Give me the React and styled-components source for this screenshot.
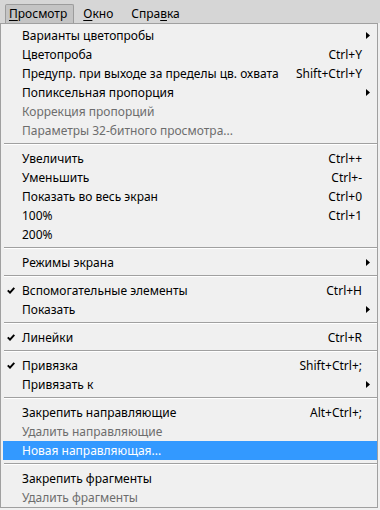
import * as React from "react"
import styled, { createGlobalStyle } from "styled-components"

const GlobalStyle = createGlobalStyle`
  html, body {
    margin: 0;
    padding: 0;
    background: #f0f0f0;
  }
  body {
    font-family: "Noto Sans", "Open Sans", "DejaVu Sans", sans-serif;
    font-size: 12px;
    color: #000;
  }
`

const MenuBar = styled.div`
  display: flex;
  align-items: flex-end;
  height: 23px;
  background: #d6d6d6;
  padding-left: 5px;
  box-sizing: border-box;
`
const BarItem = styled.div`
  height: 19px;
  line-height: 18px;
  padding: ${props => (props.$open ? "0 6px 0 3px" : "0 8px")};
  box-sizing: border-box;
  background: ${props => (props.$open ? "#c4c4c4" : "transparent")};
  border: 1px solid ${props => (props.$open ? "#9c9c9c" : "transparent")};
  border-bottom: none;
  border-radius: 2px 2px 0 0;

  u {
    text-decoration: underline;
    text-underline-offset: 2px;
  }
`

const Panel = styled.div`
  width: 378px;
  box-sizing: border-box;
  border: 1px solid #a0a0a0;
  background: #f0f0f0;
  padding: 2px 0 0 1px;
`
const Row = styled.div`
  position: relative;
  display: flex;
  align-items: center;
  height: 19px;
  margin-left: ${props => (props.$active ? "1px" : "0")};
  padding-left: ${props => (props.$active ? "19px" : "20px")};
  padding-right: 15px;
  background: ${props => (props.$active ? "#3399ff" : "transparent")};
  color: ${props =>
    props.$active ? "#fff" : props.$disabled ? "#6d6d6d" : "#000"};
  white-space: nowrap;
`
const Label = styled.span`
  flex: 1;
  line-height: 19px;
`
const Shortcut = styled.span`
  line-height: 19px;
`
const Check = styled.svg`
  position: absolute;
  left: 5px;
  top: 6px;
`
const Arrow = styled.svg`
  position: absolute;
  right: 7px;
  top: 6px;
`
const Separator = styled.div`
  height: 9px;
  box-sizing: border-box;
  padding: 3px 0 0 2px;

  &::before {
    content: "";
    display: block;
    height: 1px;
    background: #a0a0a0;
    border-bottom: 1px solid #ffffff;
  }
`

const groups = [
  [
    { label: "Варианты цветопробы", sub: true },
    { label: "Цветопроба", key: "Ctrl+Y" },
    { label: "Предупр. при выходе за пределы цв. охвата", key: "Shift+Ctrl+Y" },
    { label: "Попиксельная пропорция", sub: true },
    { label: "Коррекция пропорций", disabled: true },
    { label: "Параметры 32-битного просмотра...", disabled: true },
  ],
  [
    { label: "Увеличить", key: "Ctrl++" },
    { label: "Уменьшить", key: "Ctrl+-" },
    { label: "Показать во весь экран", key: "Ctrl+0" },
    { label: "100%", key: "Ctrl+1" },
    { label: "200%" },
  ],
  [{ label: "Режимы экрана", sub: true }],
  [
    { label: "Вспомогательные элементы", key: "Ctrl+H", checked: true },
    { label: "Показать", sub: true },
  ],
  [{ label: "Линейки", key: "Ctrl+R", checked: true }],
  [
    { label: "Привязка", key: "Shift+Ctrl+;", checked: true },
    { label: "Привязать к", sub: true },
  ],
  [
    { label: "Закрепить направляющие", key: "Alt+Ctrl+;" },
    { label: "Удалить направляющие", disabled: true },
    { label: "Новая направляющая...", active: true },
  ],
  [
    { label: "Закрепить фрагменты" },
    { label: "Удалить фрагменты", disabled: true },
  ],
]

const MenuRow = ({ item }) => (
  <Row $active={item.active} $disabled={item.disabled}>
    {item.checked && (
      <Check width="8" height="7" viewBox="0 0 8 7">
        <path d="M0.8 3.4 L3 5.6 L7.3 0.8" fill="none" stroke="#000" strokeWidth="2" />
      </Check>
    )}
    <Label>{item.label}</Label>
    {item.key && <Shortcut>{item.key}</Shortcut>}
    {item.sub && (
      <Arrow width="4" height="7" viewBox="0 0 4 7">
        <polygon points="0,0 4,3.5 0,7" fill="#000" />
      </Arrow>
    )}
  </Row>
)

const App = () => (
  <>
    <GlobalStyle />
    <MenuBar>
      <BarItem $open>
        <u>П</u>росмотр
      </BarItem>
      <BarItem>
        <u>О</u>кно
      </BarItem>
      <BarItem>
        Спра<u>в</u>ка
      </BarItem>
    </MenuBar>
    <Panel>
      {groups.map((group, i) => (
        <React.Fragment key={i}>
          {i > 0 && <Separator />}
          {group.map(item => (
            <MenuRow key={item.label} item={item} />
          ))}
        </React.Fragment>
      ))}
    </Panel>
  </>
)

export default App
